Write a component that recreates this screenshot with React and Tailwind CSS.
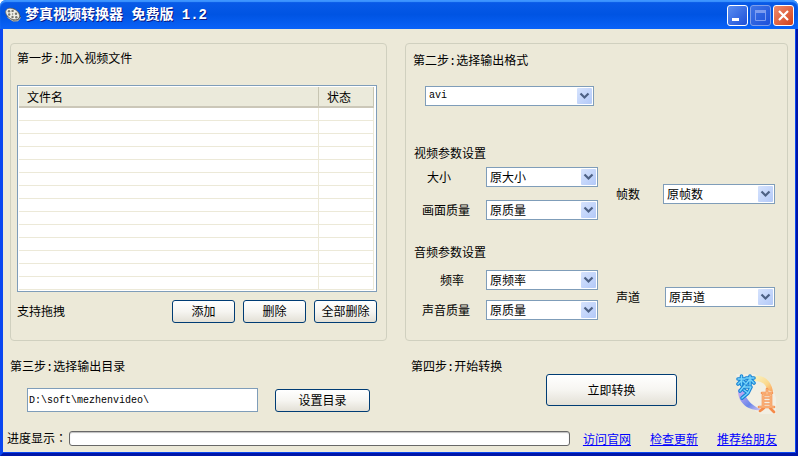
import { useState } from 'react';

const FILE_ROWS = 14;

function TitleIcon() {
  return (
    <svg width="16" height="16" viewBox="0 0 16 16" aria-hidden="true">
      <path d="M0.500 5 L3.500 1.500 L9 1.500 L14 5.500 L15.800 10 L13 14 L8 14.500 L2.500 10.500 Z" fill="#3c3c38" />
      <ellipse cx="7.600" cy="7" rx="7.600" ry="5" transform="rotate(32 7.600 7)" fill="#efeee6" stroke="#6b6a62" strokeWidth="0.600" />
      <g fill="#77766e">
        <circle cx="4" cy="4.300" r="1.200" />
        <circle cx="7.600" cy="3.900" r="1.200" />
        <circle cx="4.200" cy="7.500" r="1.200" />
        <circle cx="11" cy="6.800" r="1.200" />
        <circle cx="7.500" cy="10" r="1.200" />
        <circle cx="11.300" cy="10.300" r="1.200" />
        <circle cx="7.600" cy="7" r="0.700" />
      </g>
      <path d="M2.500 10.300 L8 14 L13 13.800 L15.500 10.500" fill="none" stroke="#c9c8bf" strokeWidth="1" />
    </svg>
  );
}

function Logo() {
  return (
    <svg width="40" height="40" viewBox="0 0 40 40" role="img" aria-label="梦真">
      <defs>
        <linearGradient id="arcTop" x1="0" y1="0" x2="1" y2="1">
          <stop offset="0" stopColor="#f8f3c4" />
          <stop offset="0.600" stopColor="#fbd88c" />
          <stop offset="1" stopColor="#fb9d55" />
        </linearGradient>
        <linearGradient id="arcBottom" x1="0" y1="0" x2="1" y2="1">
          <stop offset="0" stopColor="#d9b4f2" />
          <stop offset="0.600" stopColor="#6a86ea" />
          <stop offset="1" stopColor="#e5cfee" />
        </linearGradient>
      </defs>
      <path d="M0 0 H19 L36 12 L40 24 V40 H24 L4 26 Z" fill="#f8f5ee" opacity="0.500" />
      <path d="M18 2 C28 0 36 8 37 18 L31 16 C30 10 26 7 18 7 Z" fill="url(#arcTop)" />
      <path d="M2 15 C1 28 12 38 27 36 C18 33 10 27 8 17 Z" fill="url(#arcBottom)" />
      <g fill="none" strokeLinecap="round" strokeLinejoin="round">
        <g stroke="#1683d5" strokeWidth="3.600">
          <path d="M2 5 H9 M5.500 2 V11 M5 7 L2 10 M7 7 L9 9 M10 4 H18 M14 2 V11 M13 6 L10 10 M15 6 L18 9" />
          <path d="M9 11 L4 17 M8 13 H15 L12 19 L6 24 M8 16 L12 19" />
        </g>
        <g stroke="#79d5fa" strokeWidth="1.400">
          <path d="M2 5 H9 M5.500 2 V11 M5 7 L2 10 M7 7 L9 9 M10 4 H18 M14 2 V11 M13 6 L10 10 M15 6 L18 9" />
          <path d="M9 11 L4 17 M8 13 H15 L12 19 L6 24 M8 16 L12 19" />
        </g>
        <g stroke="#f58b49" strokeWidth="2.600">
          <path d="M26 19 H36 M31 15 V20 M27 21 V32 M35 21 V32 M27 21 H35 M23 33 H38 M28 34 L24 37 M34 34 L38 38" />
        </g>
        <g stroke="#f79a5c" strokeWidth="1.300">
          <path d="M28 24 H34 M28 27 H34 M28 30 H34" />
        </g>
        <g stroke="#fdd5a8" strokeWidth="0.800">
          <path d="M26 19 H36 M31 15 V20 M27 21 V32 M35 21 V32 M27 21 H35 M23 33 H38" />
        </g>
      </g>
    </svg>
  );
}

function TitleBar() {
  return (
    <header className="flex h-[29px] items-center gap-1 rounded-t-[6px] bg-linear-to-b from-[#0a5be8] via-[#0054e3] to-[#0a62f8] pl-[5px] pr-1 pt-px shadow-[inset_0_2px_1px_#3d95ff]">
      <TitleIcon />
      <h1 className="flex-1 font-['Liberation_Mono','Noto_Sans_CJK_SC',monospace] text-[14px] leading-5 font-bold text-white [text-shadow:1px_1px_0_#0a1883]">
        梦真视频转换器 免费版 1.2
      </h1>
      <div className="flex gap-[2px]">
        <button type="button" aria-label="最小化" className="h-[21px] w-[21px] rounded-[3px] border border-white bg-linear-to-br from-[#5b8df0] to-[#1f4fd8]">
          <svg width="19" height="19" viewBox="0 0 19 19">
            <rect x="4" y="12" width="7" height="3" fill="#fff" />
          </svg>
        </button>
        <button type="button" aria-label="最大化" disabled className="h-[21px] w-[21px] rounded-[3px] border border-[#7f9fea] bg-linear-to-br from-[#3f74e6] to-[#1c50da]">
          <svg width="19" height="19" viewBox="0 0 19 19">
            <path d="M4.500 5 V14.500 H14.500 V5" fill="none" stroke="#7c9cf0" />
            <rect x="4" y="4" width="11" height="3" fill="#7c9cf0" />
          </svg>
        </button>
        <button type="button" aria-label="关闭" className="h-[21px] w-[21px] rounded-[3px] border border-white bg-linear-to-br from-[#ee8a6c] to-[#d33f12]">
          <svg width="19" height="19" viewBox="0 0 19 19">
            <path d="M5 5 L14 14 M14 5 L5 14" stroke="#fff" strokeWidth="2.200" />
          </svg>
        </button>
      </div>
    </header>
  );
}

function Button({ className, children }) {
  return (
    <button
      type="button"
      className={`rounded-[3px] border border-[#003c74] bg-linear-to-b from-white via-[#f6f5f1] to-[#e3e0d6] ${className}`}
    >
      {children}
    </button>
  );
}

function Select({ id, label, className, options }) {
  return (
    <div className={`relative ${className}`}>
      <select id={id} aria-label={label} className="block h-5 w-full appearance-none border border-[#7f9db9] bg-white pr-5 pl-[3px] leading-4">
        {options.map((option) => (
          <option key={option}>{option}</option>
        ))}
      </select>
      <svg className="pointer-events-none absolute top-[2px] right-[2px]" width="15" height="16" viewBox="0 0 15 16">
        <defs>
          <linearGradient id={`${id}-arrow`} x1="0" y1="0" x2="1" y2="1">
            <stop offset="0" stopColor="#d6e3fd" />
            <stop offset="1" stopColor="#b3c9f8" />
          </linearGradient>
        </defs>
        <rect width="15" height="16" rx="1" fill={`url(#${id}-arrow)`} />
        <path d="M3.500 5.500 L7.500 9.500 L11.500 5.500" fill="none" stroke="#4d6185" strokeWidth="2.200" />
      </svg>
    </div>
  );
}

function Field({ id, label, labelClass, options }) {
  return (
    <div className="flex items-center">
      <label htmlFor={id} className={`w-20 ${labelClass}`}>{label}</label>
      <Select id={id} className="w-28" options={options} />
    </div>
  );
}

function FileTable() {
  return (
    <div className="border border-[#7f9db9] bg-white p-px pr-[2px]">
      <table className="w-full table-fixed border-collapse">
        <thead>
          <tr className="h-5 border-b-2 border-[#cbc7b8] bg-[#ebeadb] text-left">
            <th className="border-r border-[#c7c5b2] pl-2 font-normal">文件名</th>
            <th className="w-[55px] border-r border-[#c7c5b2] pl-2 font-normal">状态</th>
          </tr>
        </thead>
        <tbody>
          {Array.from({ length: FILE_ROWS }, (_, i) => (
            <tr key={i} className="h-[13px] border-b border-[#ece9d8]">
              <td className="border-r border-[#ece9d8]"></td>
              <td className="border-r border-[#ece9d8]"></td>
            </tr>
          ))}
        </tbody>
      </table>
    </div>
  );
}

function StepHeading({ children }) {
  return (
    <h2 className="font-['Liberation_Mono','Noto_Sans_CJK_SC',monospace]">{children}</h2>
  );
}

export default function App() {
  const [outputDir, setOutputDir] = useState('D:\\soft\\mezhenvideo\\');

  return (
    <div className="bg-white font-['Noto_Sans_CJK_SC',sans-serif] text-[12px] leading-4 text-black">
      <TitleBar />
      <main className="border-r-2 border-b-[3px] border-l-[3px] border-r-[#0016a8] border-b-[#0016a8] border-l-[#0a46f0] bg-[#ece9d8] pt-[14px] pr-px pb-[6px] shadow-[inset_-1px_-1px_0_#0a46f0]">
        <div className="grid grid-cols-[377fr_383fr] gap-[18px] px-[7px]">
          {/* 第一步 */}
          <section className="flex h-[298px] flex-col rounded-[4px] border border-[#d0d0bf] pt-2 pr-[9px] pl-[6px]">
            <StepHeading>第一步:加入视频文件</StepHeading>
            <div className="mt-[17px]">
              <FileTable />
            </div>
            <div className="mt-2 flex items-center gap-2">
              <span className="flex-1">支持拖拽</span>
              <Button className="h-[23px] w-[63px]">添加</Button>
              <Button className="h-[23px] w-[63px]">删除</Button>
              <Button className="h-[23px] w-[63px]">全部删除</Button>
            </div>
          </section>

          {/* 第二步 */}
          <section className="h-[298px] rounded-[4px] border border-[#d0d0bf] pt-[10px] pr-3">
            <div className="pl-[7px]">
              <StepHeading>第二步:选择输出格式</StepHeading>
            </div>
            <div className="mt-4 pl-[19px] font-['Liberation_Mono',monospace] text-[10px]">
              <Select id="format" label="输出格式" className="w-[169px]" options={['avi', 'mp4', 'wmv', 'flv']} />
            </div>

            <h3 className="mt-[39px] pl-2">视频参数设置</h3>
            <div className="mt-[6px] flex items-center justify-between">
              <div className="flex flex-col gap-[13px]">
                <Field id="size" label="大小" labelClass="pl-[21px]" options={['原大小']} />
                <Field id="quality" label="画面质量" labelClass="pl-4" options={['原质量']} />
              </div>
              <div className="flex items-center gap-[23px]">
                <label htmlFor="fps">帧数</label>
                <Select id="fps" className="w-28" options={['原帧数']} />
              </div>
            </div>

            <h3 className="mt-6 pl-2">音频参数设置</h3>
            <div className="mt-[10px] flex items-center justify-between">
              <div className="flex flex-col gap-[10px]">
                <Field id="rate" label="频率" labelClass="pl-[34px]" options={['原频率']} />
                <Field id="sound" label="声音质量" labelClass="pl-4" options={['原质量']} />
              </div>
              <div className="flex items-center gap-[25px] pt-1">
                <label htmlFor="channel">声道</label>
                <Select id="channel" className="w-[110px]" options={['原声道']} />
              </div>
            </div>
          </section>
        </div>

        <div className="grid grid-cols-[377fr_383fr] gap-[18px] px-[7px] pt-[19px]">
          {/* 第三步 */}
          <section>
            <StepHeading>第三步:选择输出目录</StepHeading>
            <div className="mt-3 flex items-center gap-[17px] px-[17px]">
              <input
                type="text"
                aria-label="输出目录"
                value={outputDir}
                onChange={(e) => setOutputDir(e.target.value)}
                className="h-6 min-w-0 flex-1 border border-[#7f9db9] bg-white px-px font-['Liberation_Mono',monospace] text-[10px]"
              />
              <Button className="h-[23px] w-[95px]">设置目录</Button>
            </div>
          </section>

          {/* 第四步 */}
          <section className="flex pr-3 pl-[6px]">
            <StepHeading>第四步:开始转换</StepHeading>
            <div className="flex flex-1 items-start justify-end gap-[59px] pt-[14px]">
              <Button className="h-8 w-[131px]">立即转换</Button>
              <Logo />
            </div>
          </section>
        </div>

        <footer className="mt-[15px] flex items-center pr-[18px] pl-1">
          <span className="w-[62px] whitespace-nowrap">
            进度显示<span className="font-['Noto_Sans_CJK_TC',sans-serif]">：</span>
          </span>
          <div
            role="progressbar"
            aria-label="进度显示"
            aria-valuenow={0}
            className="h-[15px] flex-1 rounded-[3px] border border-[#686868] bg-white shadow-[inset_0_1px_1px_#bebebe]"
          ></div>
          <nav className="flex gap-[19px] pt-[2px] pl-[13px] text-[#0000ff] underline">
            <a href="#site">访问官网</a>
            <a href="#update">检查更新</a>
            <a href="#share">推荐给朋友</a>
          </nav>
        </footer>
      </main>
    </div>
  );
}
